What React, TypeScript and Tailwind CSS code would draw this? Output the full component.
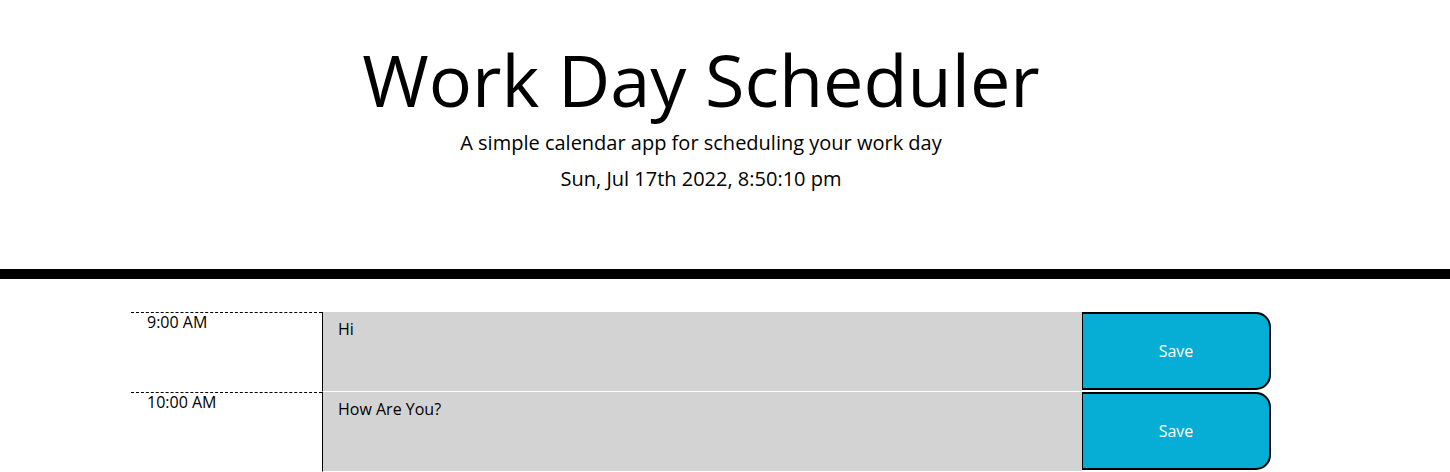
import React from "react";

const hours = [
    { label: "9:00 AM", text: "Hi" },
    { label: "10:00 AM", text: "How Are You?" },
];

export default function App() {
    return (
        <div className="w-[1450px] h-[472px] overflow-hidden bg-white text-black font-['Open_Sans',sans-serif]">
            <header className="w-full pt-[36px] pb-[75px] border-b-[10px] border-black">
                <div className="w-[1402px] text-center">
                    <h1 className="text-[72px] leading-[86px] font-normal">Work Day Scheduler</h1>
                    <p className="text-[20px] leading-[30px] mt-[6px]">A simple calendar app for scheduling your work day</p>
                    <p className="text-[20px] leading-[30px] mt-[6px]">Sun, Jul 17th 2022, 8:50:10 pm</p>
                </div>
            </header>

            <div className="ml-[131px] mt-[33px] w-[1140px]">
                {hours.map((h) => (
                    <div key={h.label} className="flex h-[80px]">
                        <div className="w-[191px] border-t border-dashed border-black pl-[16px] text-[16px] leading-[18px]">
                            {h.label}
                        </div>
                        <div className="w-[760px] bg-[#d3d3d3] border-l border-black border-b border-b-white pl-[15px] pt-[5px] text-[16px] leading-[24px]">
                            {h.text}
                        </div>
                        <div className="flex-1 pb-[2px]">
                            <button className="w-full h-full bg-[#06aed5] text-white text-[16px] border-l border-y-2 border-r-2 border-black rounded-r-[15px]">
                                Save
                            </button>
                        </div>
                    </div>
                ))}
            </div>
        </div>
    );
}
